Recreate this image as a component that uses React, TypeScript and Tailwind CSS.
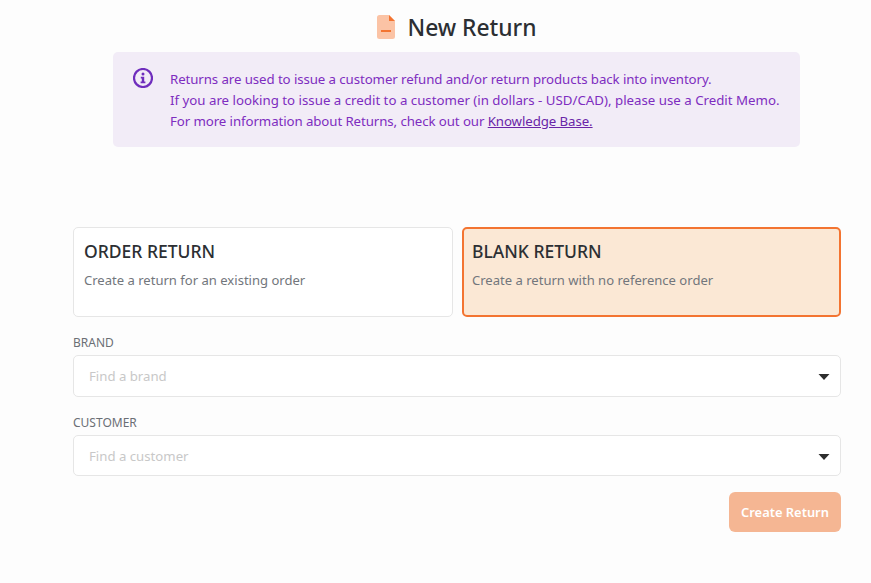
import React from 'react';

function SelectBox({ label, placeholder, boxClass }: { label: string; placeholder: string; boxClass: string }) {
  return (
    <div>
      <div className="h-[18px] pt-[1px] text-[12px] leading-[18px] text-[#6b6f75]">{label}</div>
      <div className={`mt-1 flex items-center justify-between rounded-[5px] border border-[#e6e6e6] bg-white pl-[15px] pr-[10px] ${boxClass}`}>
        <span className="text-[13.2px] text-[#c8c8c8]">{placeholder}</span>
        <svg width="12" height="6" viewBox="0 0 12 6">
          <path d="M0.5 0 H11.5 L6 6 Z" fill="#2d2d2d" />
        </svg>
      </div>
    </div>
  );
}

function TypeCard({ title, text, active }: { title: string; text: string; active?: boolean }) {
  return (
    <div
      className={
        active
          ? 'h-[90px] w-[379px] rounded-[5px] border-2 border-[#f37431] bg-[#fbe8d5] px-[8px] py-[9px]'
          : 'h-[90px] w-[380px] rounded-[5px] border border-[#e6e6e6] bg-white px-[10px] py-[10px]'
      }
    >
      <div className="text-[17.5px] leading-[26px] font-medium text-[#2c2f33]">{title}</div>
      <div className="mt-[6px] text-[13.05px] leading-[20px] text-[#72767c]">{text}</div>
    </div>
  );
}

export default function App() {
  return (
    <div className="h-[583px] w-[871px] overflow-hidden bg-[#fdfdfd] font-['Noto_Sans','Open_Sans',sans-serif]">
      <div className="ml-[73px] w-[768px]">
        <div className="flex h-[52px] items-center justify-center gap-[12px] pt-[5px]">
          <svg width="18" height="24" viewBox="0 0 18 24" className="mb-[3px]">
            <path d="M2.5 0 H12 L18 6 V21.5 A2.5 2.5 0 0 1 15.5 24 H2.5 A2.5 2.5 0 0 1 0 21.5 V2.5 A2.5 2.5 0 0 1 2.5 0 Z" fill="#fbc3a5" />
            <path d="M12 0 L18 6 H12 Z" fill="#f37431" />
            <rect x="4" y="15" width="10" height="2" fill="#f37431" />
          </svg>
          <h1 className="text-[22.8px] font-medium text-[#2c2f33]">New Return</h1>
        </div>

        <div className="ml-[40px] flex h-[95px] w-[687px] rounded-[5px] bg-[#f2ecf7] pl-5 pt-4">
          <svg width="20" height="20" viewBox="0 0 20 20" className="shrink-0">
            <circle cx="10" cy="10" r="9" fill="none" stroke="#6f2dbd" strokeWidth="2.2" />
            <circle cx="10" cy="6" r="1.5" fill="#6f2dbd" />
            <path d="M7.8 8.8 H11.2 V13.5 H12.4 V15.2 H7.6 V13.5 H8.8 V10.5 H7.8 Z" fill="#6f2dbd" />
          </svg>
          <div className="ml-[17px] pt-[1px] text-[13.28px] leading-[21px] text-[#7e2dc0]">
            <div className="tracking-[-0.09px]">Returns are used to issue a customer refund and/or return products back into inventory.</div>
            <div>If you are looking to issue a credit to a customer (in dollars - USD/CAD), please use a Credit Memo.</div>
            <div className="tracking-[-0.09px]">
              For more information about Returns, check out our{' '}
              <a className="text-[#6a25a8] underline">Knowledge Base.</a>
            </div>
          </div>
        </div>

        <div className="mt-[80px] flex gap-[9px]">
          <TypeCard title="ORDER RETURN" text="Create a return for an existing order" />
          <TypeCard title="BLANK RETURN" text="Create a return with no reference order" active />
        </div>

        <div className="mt-4 flex flex-col gap-4">
          <SelectBox label="BRAND" placeholder="Find a brand" boxClass="h-[42px] pt-[1px]" />
          <SelectBox label="CUSTOMER" placeholder="Find a customer" boxClass="h-[41px] pt-[2px]" />
        </div>

        <div className="mt-4 flex justify-end">
          <button className="h-10 w-28 rounded-[6px] bg-[#f5b693] pt-[1px] text-[12.9px] font-semibold text-white">
            Create Return
          </button>
        </div>
      </div>
    </div>
  );
}
